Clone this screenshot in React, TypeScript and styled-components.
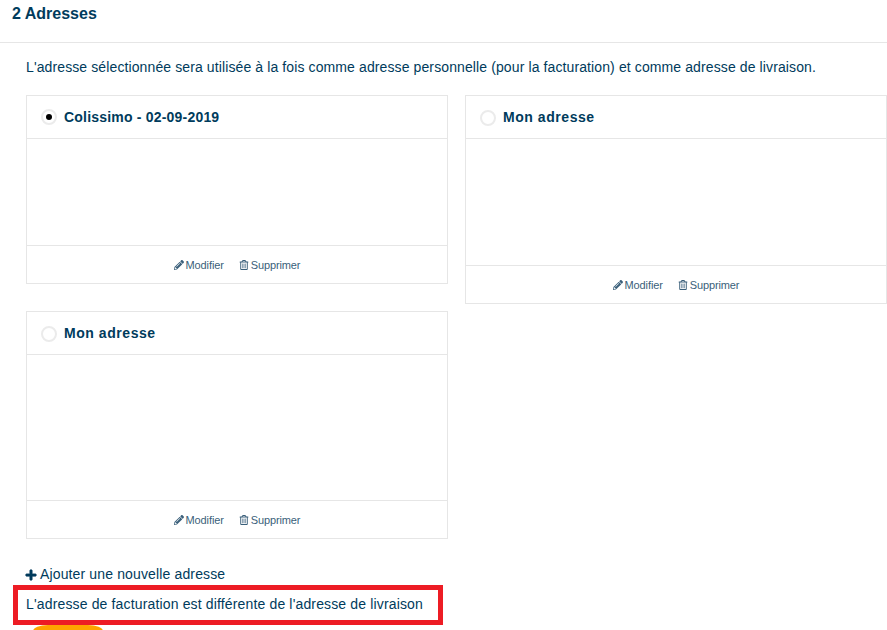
import styled, { createGlobalStyle } from "styled-components";
import { FaPencilAlt, FaPlus, FaRegTrashAlt } from "react-icons/fa";

const GlobalStyle = createGlobalStyle`
  html, body {
    margin: 0;
    padding: 0;
    height: 630px;
    overflow: hidden;
    background: #fff;
    font-family: "Liberation Sans", Arial, sans-serif;
    color: #003b5c;
  }
`;

const Page = styled.div`
  width: 887px;
  height: 630px;
  overflow: hidden;
`;

const Header = styled.div`
  height: 43px;
  padding: 5px 0 0 12px;
  box-sizing: border-box;
  border-bottom: 1px solid #e6e6e6;
`;

const Title = styled.h2`
  margin: 0;
  font-size: 16px;
  line-height: 17px;
  font-weight: 700;
`;

const Content = styled.div`
  padding: 16px 0 0 26px;
`;

const Intro = styled.p`
  margin: 0 0 19px;
  font-size: 14px;
  line-height: 17px;
  letter-spacing: 0.11px;
  white-space: nowrap;
`;

const Cards = styled.div`
  display: grid;
  grid-template-columns: 422px 422px;
  column-gap: 17px;
  row-gap: 7px;
  align-items: start;
`;

const Card = styled.div`
  border: 1px solid #e6e6e6;
  box-sizing: border-box;
`;

const CardHead = styled.div`
  height: 42px;
  display: flex;
  align-items: center;
  gap: 7px;
  padding-left: 14px;
  border-bottom: 1px solid #e6e6e6;
`;

const Radio = styled.span<{ $checked?: boolean }>`
  width: 16px;
  height: 16px;
  box-sizing: border-box;
  border-radius: 50%;
  border: 2px solid #ebebeb;
  display: flex;
  align-items: center;
  justify-content: center;
  flex-shrink: 0;
  margin-top: ${({ $checked }) => ($checked ? 0 : 2)}px;

  &::after {
    content: "";
    display: ${({ $checked }) => ($checked ? "block" : "none")};
    width: 6px;
    height: 6px;
    border-radius: 50%;
    background: #000;
  }
`;

const CardName = styled.span<{ $spacing: number }>`
  font-size: 14px;
  font-weight: 700;
  letter-spacing: ${({ $spacing }) => $spacing}px;
`;

const CardBody = styled.div<{ $height: number }>`
  height: ${({ $height }) => $height}px;
`;

const CardFoot = styled.div`
  height: 38px;
  box-sizing: border-box;
  border-top: 1px solid #e6e6e6;
  display: flex;
  align-items: center;
  justify-content: center;
  gap: 15px;
`;

const Action = styled.a`
  display: flex;
  align-items: center;
  gap: 2px;
  font-size: 11px;
  letter-spacing: -0.12px;
  color: #3a5f7a;

  svg {
    font-size: 10px;
  }
`;

const AddLink = styled.a`
  display: flex;
  align-items: center;
  gap: 3px;
  margin-top: 27px;
  margin-left: -1px;
  font-size: 14px;
  line-height: 17px;
  letter-spacing: 0.14px;

  svg {
    font-size: 12px;
    stroke: currentColor;
    stroke-width: 30;
  }
`;

const Highlight = styled.div`
  margin: 2px 0 0 13px;
  width: 430px;
  height: 40px;
  box-sizing: border-box;
  border: 5px solid #ed1c24;
  padding: 6px 0 0 8px;
  font-size: 14px;
  line-height: 17px;
  letter-spacing: 0.15px;
  white-space: nowrap;
`;

const OrangeButton = styled.div`
  margin-left: 33px;
  width: 70px;
  height: 30px;
  border-radius: 15px 15px 0 0 / 6px 6px 0 0;
  background: #ffa300;
`;

function AddressCard({
  name,
  bodyHeight,
  checked,
  spacing,
}: {
  name: string;
  bodyHeight: number;
  checked?: boolean;
  spacing: number;
}) {
  return (
    <Card>
      <CardHead>
        <Radio $checked={checked} />
        <CardName $spacing={spacing}>{name}</CardName>
      </CardHead>
      <CardBody $height={bodyHeight} />
      <CardFoot>
        <Action>
          <FaPencilAlt />
          Modifier
        </Action>
        <Action>
          <FaRegTrashAlt />
          Supprimer
        </Action>
      </CardFoot>
    </Card>
  );
}

export default function App() {
  return (
    <Page>
      <GlobalStyle />
      <Header>
        <Title>2 Adresses</Title>
      </Header>
      <Content>
        <Intro>
          L'adresse sélectionnée sera utilisée à la fois comme adresse personnelle (pour la facturation) et comme
          adresse de livraison.
        </Intro>
        <Cards>
          <AddressCard name="Colissimo - 02-09-2019" bodyHeight={106} spacing={0.2} checked />
          <AddressCard name="Mon adresse" bodyHeight={126} spacing={0.55} />
          <AddressCard name="Mon adresse" bodyHeight={145} spacing={0.55} />
        </Cards>
        <AddLink>
          <FaPlus />
          Ajouter une nouvelle adresse
        </AddLink>
      </Content>
      <Highlight>L'adresse de facturation est différente de l'adresse de livraison</Highlight>
      <OrangeButton />
    </Page>
  );
}
